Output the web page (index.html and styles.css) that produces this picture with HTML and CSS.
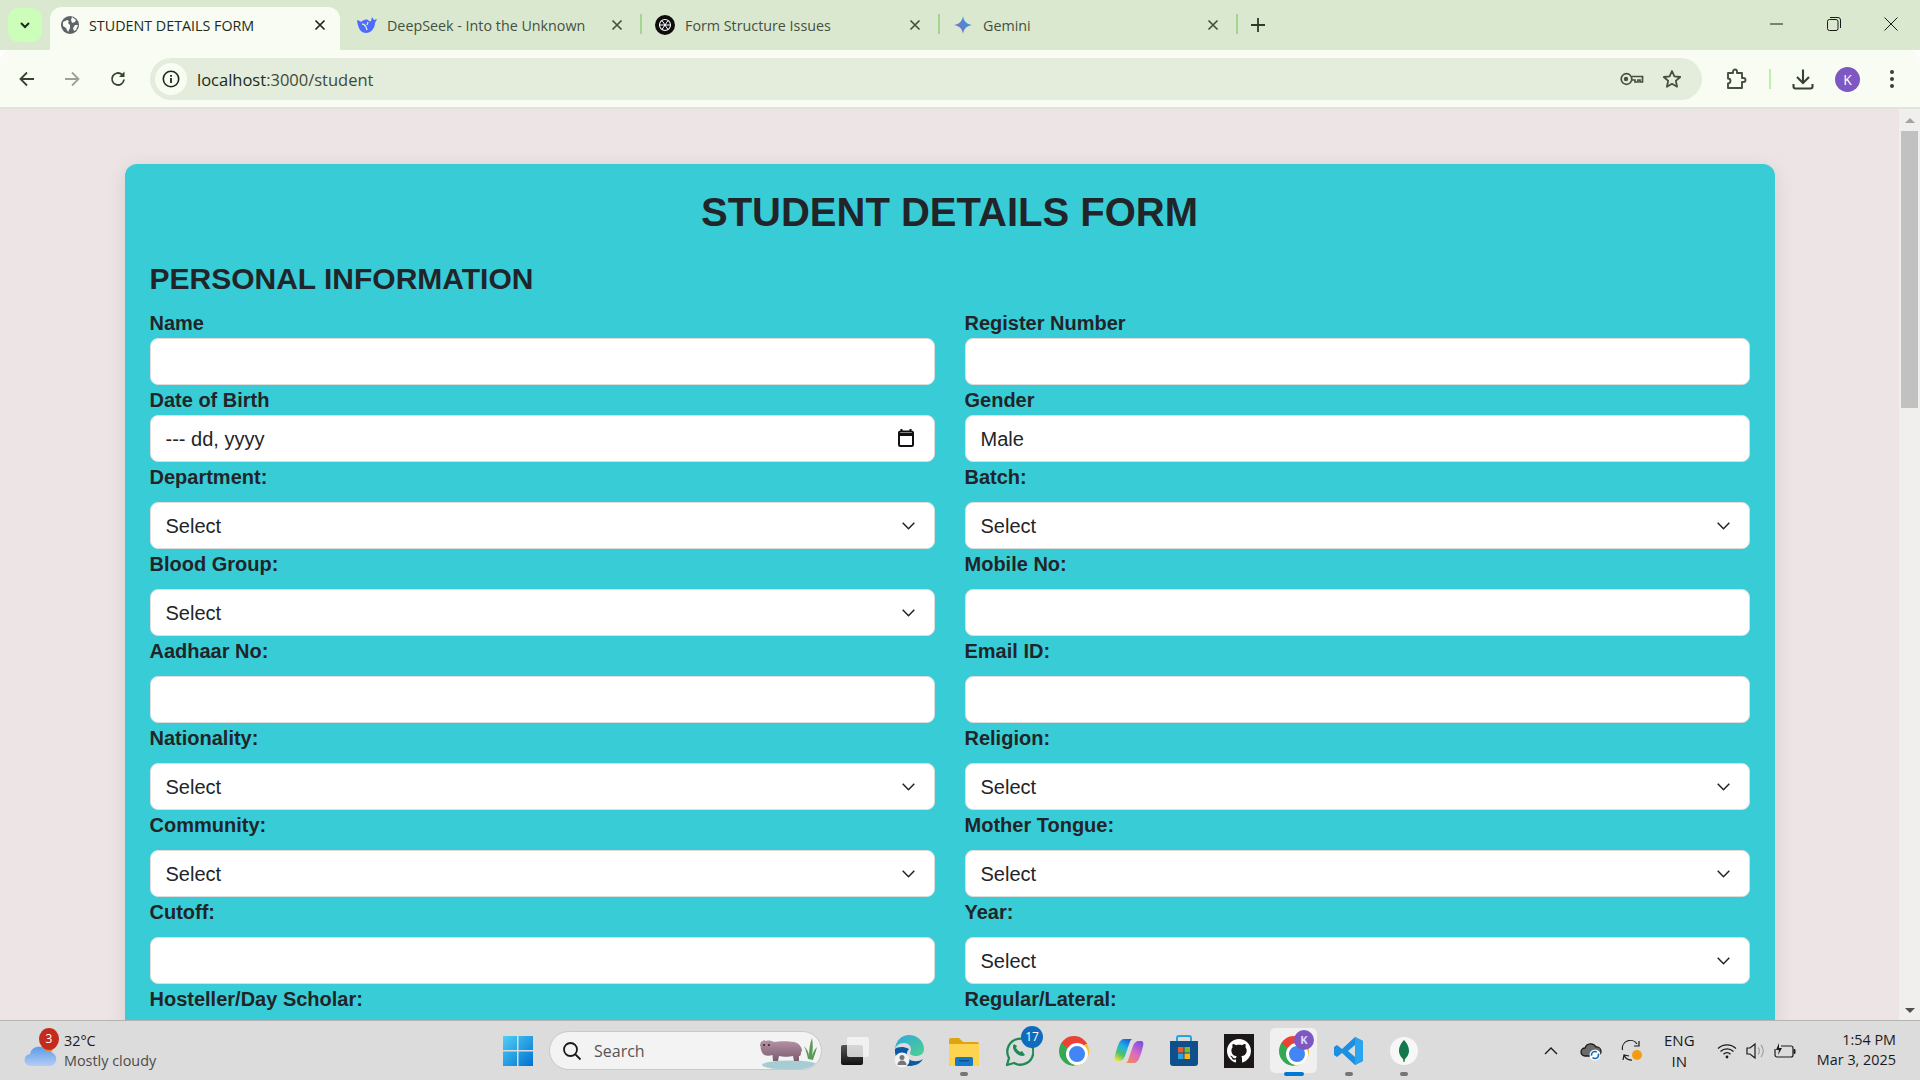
FILE: index.html
```html
<!DOCTYPE html>
<html lang="en">
  <head>
    <meta charset="utf-8" />
    <title>STUDENT DETAILS FORM</title>
    <link rel="stylesheet" href="styles.css">
  </head>

  <body>
    <div class="browser">
      <!-- Tab strip -->
      <div class="tabstrip">
        <button class="tab-search">
          <svg width="14" height="14" viewBox="0 0 14 14"><path d="M3 5l4 4 4-4" fill="none" stroke="#1c2a18" stroke-width="2"/></svg>
        </button>
        <div class="tab tab-active">
          <svg class="favicon" width="18" height="18" viewBox="0 0 18 18"><circle cx="9" cy="9" r="9" fill="#5f6368"/><path d="M2 6l4-2 2 1-1 2 2 2v3l-2 4-2-4-3-2zM11 1l4 3-1 2-3 1-1-3zM14 9l3 0-2 5-2 1-1-3z" fill="#f8fcf3"/></svg>
          <span class="tab-title">STUDENT DETAILS FORM</span>
          <svg class="tab-close" width="12" height="12" viewBox="0 0 12 12"><path d="M1.5 1.5l9 9M10.5 1.5l-9 9" stroke="#1c2a18" stroke-width="1.7"/></svg>
        </div>
        <div class="tab">
          <svg class="favicon" width="20" height="16" viewBox="0 0 20 16"><path d="M0 3c1 0 3 1 4 2 2-2 5-3 7-2 1 1 2 2 3 1l1-4 2 3 3-1-2 4c0 5-4 10-9 10-5 0-8-4-9-13z" fill="#4d6bfe"/><path d="M5 7c2 0 4 2 5 6M11 5l-1 3" stroke="#dae8cf" stroke-width="1.3" fill="none"/></svg>
          <span class="tab-title">DeepSeek - Into the Unknown</span>
          <svg class="tab-close" width="12" height="12" viewBox="0 0 12 12"><path d="M1.5 1.5l9 9M10.5 1.5l-9 9" stroke="#45503f" stroke-width="1.7"/></svg>
        </div>
        <div class="tab">
          <svg class="favicon" width="20" height="20" viewBox="0 0 20 20"><circle cx="10" cy="10" r="10" fill="#0d0d0d"/><circle cx="10" cy="10" r="5.5" fill="none" stroke="#fff" stroke-width="1.1"/><path d="M7 5.5l6 9M13 5.5l-6 9M4.6 10h10.8" stroke="#fff" stroke-width="1"/></svg>
          <span class="tab-title">Form Structure Issues</span>
          <svg class="tab-close" width="12" height="12" viewBox="0 0 12 12"><path d="M1.5 1.5l9 9M10.5 1.5l-9 9" stroke="#45503f" stroke-width="1.7"/></svg>
        </div>
        <div class="tab">
          <svg class="favicon" width="20" height="20" viewBox="0 0 20 20"><defs><linearGradient id="gem" x1="0" y1="1" x2="1" y2="0"><stop offset="0" stop-color="#9168c0"/><stop offset=".5" stop-color="#5684d1"/><stop offset="1" stop-color="#1ba1e3"/></linearGradient></defs><path d="M10 1c.8 5 3.2 8 9 9-5.8 1-8.2 4-9 9-.8-5-3.2-8-9-9 5.8-1 8.2-4 9-9z" fill="url(#gem)"/></svg>
          <span class="tab-title">Gemini</span>
          <svg class="tab-close" width="12" height="12" viewBox="0 0 12 12"><path d="M1.5 1.5l9 9M10.5 1.5l-9 9" stroke="#45503f" stroke-width="1.7"/></svg>
        </div>
        <svg class="new-tab" width="14" height="14" viewBox="0 0 14 14"><path d="M7 0v14M0 7h14" stroke="#2c3a28" stroke-width="1.8"/></svg>
        <div class="window-controls">
          <svg width="14" height="14" viewBox="0 0 14 14"><path d="M0 7h13" stroke="#1a1a1a" stroke-width="1"/></svg>
          <svg width="14" height="14" viewBox="0 0 14 14"><rect x=".5" y="2.5" width="10.5" height="11" rx="2" fill="none" stroke="#1a1a1a"/><path d="M3 .5h8a2.5 2.5 0 0 1 2.5 2.5v8" fill="none" stroke="#1a1a1a"/></svg>
          <svg width="14" height="14" viewBox="0 0 14 14"><path d="M.5.5l13 13M13.5.5l-13 13" stroke="#1a1a1a" stroke-width="1"/></svg>
        </div>
      </div>

      <!-- Address bar -->
      <div class="toolbar">
        <svg class="nav-icon nav-back" width="18" height="18" viewBox="0 0 18 18"><path d="M16 9H3M9 2.5L2.5 9 9 15.5" fill="none" stroke="#36432f" stroke-width="1.8"/></svg>
        <svg class="nav-icon nav-forward" width="18" height="18" viewBox="0 0 18 18"><path d="M2 9h13M9 2.5L15.5 9 9 15.5" fill="none" stroke="#9aa394" stroke-width="1.8"/></svg>
        <svg class="nav-icon nav-reload" width="18" height="18" viewBox="0 0 18 18"><path d="M15 9.5A6 6 0 1 1 13 4.5" fill="none" stroke="#36432f" stroke-width="1.8"/><path d="M15.5 1.5V7H10z" fill="#36432f"/></svg>
        <div class="omnibox">
          <span class="site-info">
            <svg width="18" height="18" viewBox="0 0 18 18"><circle cx="9" cy="9" r="7.7" fill="none" stroke="#1c2a18" stroke-width="1.6"/><path d="M9 8v5M9 5v1.8" stroke="#1c2a18" stroke-width="1.8"/></svg>
          </span>
          <span class="url">localhost<span class="url-path">:3000/student</span></span>
          <svg class="omni-icon" width="24" height="16" viewBox="0 0 24 16"><circle cx="6.5" cy="8" r="5.3" fill="none" stroke="#45503f" stroke-width="1.7"/><circle cx="6" cy="8" r="2.2" fill="#45503f"/><path d="M12 5.5h10.5V11H20V9h-2v2h-3V9h-3" fill="none" stroke="#45503f" stroke-width="1.7"/></svg>
          <svg class="omni-icon" width="20" height="20" viewBox="0 0 20 20"><path d="M10 2l2.4 5.4 5.8.6-4.4 3.9 1.3 5.8L10 14.7l-5.1 3 1.3-5.800L1.800 8l5.800-.6z" fill="none" stroke="#45503f" stroke-width="1.8" stroke-linejoin="round"/></svg>
        </div>
        <svg class="tool-icon" width="22" height="22" viewBox="0 0 22 22"><path d="M3 5h5V3.5a2 2 0 0 1 4 0V5h5v5h1.5a2 2 0 0 1 0 4H17v6H3v-4.5a2.5 2.5 0 0 0 0-5z" fill="none" stroke="#45503f" stroke-width="1.9" stroke-linejoin="round"/></svg>
        <span class="tool-sep"></span>
        <svg class="tool-icon tool-download" width="22" height="22" viewBox="0 0 22 22"><path d="M11 1.5v13M5 9l6 6 6-6M1.5 16v2.5a2 2 0 0 0 2 2h15a2 2 0 0 0 2-2V16" fill="none" stroke="#36432f" stroke-width="2.1"/></svg>
        <span class="avatar">K</span>
        <svg class="tool-icon tool-menu" width="6" height="20" viewBox="0 0 6 20"><circle cx="3" cy="3" r="2" fill="#36432f"/><circle cx="3" cy="10" r="2" fill="#36432f"/><circle cx="3" cy="17" r="2" fill="#36432f"/></svg>
      </div>

      <div class="viewport">
        <main class="page">
          <form class="form-card">
            <h1 class="form-title">STUDENT DETAILS FORM</h1>
            <h2 class="section-title">PERSONAL INFORMATION</h2>
            <div class="form-grid">
              <div class="field"><label class="field-label">Name</label><input class="control" type="text"></div>
              <div class="field"><label class="field-label">Register Number</label><input class="control" type="text"></div>
              <div class="field">
                <label class="field-label">Date of Birth</label>
                <div class="date-wrap">
                  <input class="control" type="text" value="--- dd, yyyy">
                  <svg class="date-icon" width="18" height="20" viewBox="0 0 18 20"><path d="M4.5 1v3M13.5 1v3" stroke="#111" stroke-width="2"/><rect x="2" y="3.5" width="14" height="14.5" rx="1.5" fill="none" stroke="#111" stroke-width="2"/><path d="M2 5h14v3H2z" fill="#111"/></svg>
                </div>
              </div>
              <div class="field"><label class="field-label">Gender</label><input class="control" type="text" value="Male"></div>

              <div class="field"><label class="field-label field-label-spaced">Department:</label><select class="control control-select"><option>Select</option></select></div>
              <div class="field"><label class="field-label field-label-spaced">Batch:</label><select class="control control-select"><option>Select</option></select></div>
              <div class="field"><label class="field-label field-label-spaced">Blood Group:</label><select class="control control-select"><option>Select</option></select></div>
              <div class="field"><label class="field-label field-label-spaced">Mobile No:</label><input class="control" type="text"></div>
              <div class="field"><label class="field-label field-label-spaced">Aadhaar No:</label><input class="control" type="text"></div>
              <div class="field"><label class="field-label field-label-spaced">Email ID:</label><input class="control" type="text"></div>
              <div class="field"><label class="field-label field-label-spaced">Nationality:</label><select class="control control-select"><option>Select</option></select></div>
              <div class="field"><label class="field-label field-label-spaced">Religion:</label><select class="control control-select"><option>Select</option></select></div>
              <div class="field"><label class="field-label field-label-spaced">Community:</label><select class="control control-select"><option>Select</option></select></div>
              <div class="field"><label class="field-label field-label-spaced">Mother Tongue:</label><select class="control control-select"><option>Select</option></select></div>
              <div class="field"><label class="field-label field-label-spaced">Cutoff:</label><input class="control" type="text"></div>
              <div class="field"><label class="field-label field-label-spaced">Year:</label><select class="control control-select"><option>Select</option></select></div>
              <div class="field"><label class="field-label field-label-spaced">Hosteller/Day Scholar:</label><select class="control control-select"><option>Select</option></select></div>
              <div class="field"><label class="field-label field-label-spaced">Regular/Lateral:</label><select class="control control-select"><option>Select</option></select></div>
            </div>
          </form>
        </main>
        <div class="scrollbar">
          <span class="scroll-arrow scroll-up"></span>
          <span class="scroll-thumb"></span>
          <span class="scroll-arrow scroll-down"></span>
        </div>
      </div>

      <!-- Windows taskbar -->
      <footer class="taskbar">
        <div class="weather">
          <span class="weather-icon">
            <svg width="34" height="30" viewBox="0 0 34 30"><defs><linearGradient id="cloud" x1="0" y1="0" x2="0" y2="1"><stop offset="0" stop-color="#5d9be8"/><stop offset="1" stop-color="#b3cdf5"/></linearGradient></defs><circle cx="24" cy="9" r="5" fill="#f08a24"/><path d="M7 27a6 6 0 0 1-1-12 9 9 0 0 1 17-2 7 7 0 0 1 4 14z" fill="url(#cloud)"/></svg>
            <span class="weather-badge">3</span>
          </span>
          <div class="weather-text">
            <span class="weather-temp">32°C</span>
            <span class="weather-desc">Mostly cloudy</span>
          </div>
        </div>

        <svg class="win-logo" width="30" height="30" viewBox="0 0 30 30"><defs><linearGradient id="win" x1="0" y1="0" x2="1" y2="1"><stop offset="0" stop-color="#4fd0f5"/><stop offset="1" stop-color="#0070d1"/></linearGradient></defs><path d="M0 0h14v14H0zM15.5 0H30v14H15.5zM0 15.5h14V30H0zM15.5 15.5H30V30H15.5z" fill="url(#win)"/></svg>

        <div class="task-search">
          <svg width="20" height="20" viewBox="0 0 20 20"><circle cx="8.5" cy="8.5" r="6.5" fill="none" stroke="#1a1a1a" stroke-width="1.8"/><path d="M13 13l5.5 5.5" stroke="#1a1a1a" stroke-width="1.8"/></svg>
          <span class="task-search-text">Search</span>
          <svg class="search-art" width="60" height="38" viewBox="0 0 60 38"><defs><linearGradient id="hippo" x1="0" y1="0" x2="0" y2="1"><stop offset="0" stop-color="#b793a6"/><stop offset="1" stop-color="#7a5c70"/></linearGradient></defs><ellipse cx="32" cy="33" rx="28" ry="4.5" fill="#a7cdd4"/><path d="M50 27c-1-5-2-9-4-13 3 3 5 7 5 10 0-7 1-13 3-18 1 6 1 12 0 18 1-4 3-7 5-9-1 5-3 9-4 13z" fill="#5c9a58"/><path d="M2 14c0-3 1-5 3-5l1-1 2 1c3-1 6 0 8 1 6-1 14-1 20 0 5 1 8 5 8 9l-1 1c0 1 0 3-1 4l-1 0v5h-5l-1-5c-4 1-10 1-14 0l-1 5h-5l-.5-6c-3 1-6 1-8 0-2-1-4-4-4-9z" fill="url(#hippo)"/><circle cx="6" cy="13" r="1" fill="#2c2228"/><circle cx="11" cy="13" r="1" fill="#2c2228"/></svg>
        </div>

        <div class="task-icons">
          <span class="task-item">
            <svg width="30" height="30" viewBox="0 0 30 30"><defs><linearGradient id="tv" x1="0" y1="0" x2="0" y2="1"><stop offset="0" stop-color="#555"/><stop offset="1" stop-color="#111"/></linearGradient></defs><rect x="2" y="9" width="22" height="20" rx="2" fill="url(#tv)"/><rect x="8" y="1" width="22" height="20" rx="2" fill="#f6f6f6" fill-opacity=".8"/></svg>
          </span>
          <span class="task-item">
            <svg width="30" height="34" viewBox="0 0 30 34"><defs><linearGradient id="edge1" x1="0" y1="0" x2="1" y2="1"><stop offset="0" stop-color="#2fa8e0"/><stop offset="1" stop-color="#4fd18b"/></linearGradient></defs><path d="M1 15C2 6 8 1 15 1c8 0 15 6 15 14 0 5-4 7-8 7-3 0-6-1-6-3 0-1 1-2 1-4 0-3-3-6-7-6-5 0-8 3-9 6z" fill="url(#edge1)"/><path d="M1 15c-1 9 6 17 14 17 6 0 11-2 14-7-4 3-11 3-14 0-3-3-3-7 0-10-6-3-12-2-14 0z" fill="#0c59a4"/><circle cx="8" cy="26" r="7.5" fill="#f2f2f2"/><circle cx="8" cy="23.5" r="2.5" fill="#767676"/><path d="M3.5 31c0-3 2-4.5 4.5-4.5s4.5 1.5 4.5 4.5z" fill="#767676"/></svg>
          </span>
          <span class="task-item task-running">
            <svg width="32" height="30" viewBox="0 0 32 30"><path d="M1 4a2 2 0 0 1 2-2h8l4 4h14a2 2 0 0 1 2 2v20a2 2 0 0 1-2 2H3a2 2 0 0 1-2-2z" fill="#e0a412"/><path d="M1 8h30v20a2 2 0 0 1-2 2H3a2 2 0 0 1-2-2z" fill="#fcd450"/><rect x="7" y="21" width="18" height="9" rx="1.5" fill="#1379c9"/><rect x="11" y="24" width="10" height="1.5" fill="#0a4f8c"/></svg>
          </span>
          <span class="task-item">
            <svg width="30" height="34" viewBox="0 0 30 34"><path d="M3 31l2-7A13 13 0 1 1 10 29z" fill="none" stroke="#1f8a55" stroke-width="2.3" stroke-linejoin="round"/><path d="M10 10c-2 2-1 6 2 9s7 4 9 2l-3-4-2 1c-2-1-3-3-4-4l1-2z" fill="#1f8a55"/></svg>
            <span class="task-badge">17</span>
          </span>
          <span class="task-item"><span class="chrome-logo"></span></span>
          <span class="task-item">
            <svg width="30" height="30" viewBox="0 0 30 30"><defs><linearGradient id="cop1" x1=".7" y1="0" x2=".2" y2="1"><stop offset="0" stop-color="#1f5fd8"/><stop offset=".35" stop-color="#1fb0e8"/><stop offset=".7" stop-color="#4cc36a"/><stop offset="1" stop-color="#e7e23f"/></linearGradient><linearGradient id="cop2" x1=".8" y1="0" x2=".2" y2="1"><stop offset="0" stop-color="#7a4fe0"/><stop offset=".5" stop-color="#d868c8"/><stop offset="1" stop-color="#f28a5a"/></linearGradient></defs><path d="M20 27h-9c2 0 3-2 3.5-4L19 10c1-3 3-5 6-5h2c2 0 3 2 2 5-1 5-3 11-4 13-1 2-3 4-5 4z" fill="url(#cop2)"/><path d="M10 3h9c-2 0-3 2-3.5 4L11 20c-1 3-3 5-6 5H3c-2 0-3-2-2-5C2 15 4 9 5 7c1-2 3-4 5-4z" fill="url(#cop1)"/></svg>
          </span>
          <span class="task-item">
            <svg width="30" height="32" viewBox="0 0 30 32"><path d="M8 6V3a2 2 0 0 1 2-2h10a2 2 0 0 1 2 2v3" fill="none" stroke="#27a4e0" stroke-width="2"/><path d="M1 6h28v22a3 3 0 0 1-3 3H4a3 3 0 0 1-3-3z" fill="#0f4f8b"/><rect x="9" y="12" width="5.5" height="5.5" fill="#f05a28"/><rect x="15.5" y="12" width="5.5" height="5.5" fill="#7cb928"/><rect x="9" y="18.5" width="5.5" height="5.5" fill="#27a4e0"/><rect x="15.5" y="18.5" width="5.5" height="5.5" fill="#fbb615"/></svg>
          </span>
          <span class="task-item">
            <svg class="github-logo" width="30" height="34" viewBox="0 0 30 34"><rect width="30" height="34" fill="#1b1717"/><g transform="translate(3 5) scale(1.5)"><path d="M8 0C3.58 0 0 3.58 0 8c0 3.54 2.29 6.53 5.47 7.59.4.07.55-.17.55-.38 0-.19-.01-.82-.01-1.49-2.01.37-2.53-.49-2.69-.94-.09-.23-.48-.94-.82-1.13-.28-.15-.68-.52-.01-.53.63-.01 1.08.58 1.23.82.72 1.21 1.87.87 2.33.66.07-.52.28-.87.51-1.07-1.78-.2-3.64-.89-3.64-3.95 0-.87.31-1.59.82-2.15-.08-.2-.36-1.02.08-2.12 0 0 .67-.21 2.2.82.64-.18 1.32-.27 2-.27.68 0 1.36.09 2 .27 1.53-1.04 2.2-.82 2.2-.82.44 1.1.16 1.92.08 2.12.51.56.82 1.27.82 2.15 0 3.07-1.87 3.75-3.65 3.95.29.25.54.73.54 1.48 0 1.07-.01 1.93-.01 2.2 0 .21.15.46.55.38A8.013 8.013 0 0 0 16 8c0-4.42-3.58-8-8-8z" fill="#fff"/></g></svg>
          </span>
          <span class="task-item task-active">
            <span class="chrome-logo"></span>
            <span class="chrome-profile">K</span>
          </span>
          <span class="task-item task-running">
            <svg width="30" height="30" viewBox="0 0 30 30"><path d="M21 1l8 4v20l-8 4-13-12-5 4-3-2V11l3-2 5 4zM21 9l-7 6 7 6z" fill="#1c8fe0"/><path d="M21 1l8 4v20l-8 4z" fill="#2aa4ee"/></svg>
          </span>
          <span class="task-item task-running">
            <svg width="30" height="30" viewBox="0 0 30 30"><circle cx="15" cy="15" r="14" fill="#f7f7f7"/><path d="M15 4c4 4 5 8 5 11 0 4-3 7-4 8l-.5 3h-1l-.5-3c-1-1-4-4-4-8 0-3 1-7 5-11z" fill="#13794a"/></svg>
          </span>
        </div>

        <div class="tray">
          <svg class="tray-caret" width="14" height="8" viewBox="0 0 14 8"><path d="M1 7l6-6 6 6" fill="none" stroke="#1a1a1a" stroke-width="1.4"/></svg>
          <svg class="tray-cloud" width="22" height="20" viewBox="0 0 22 20"><path d="M5 15a4 4 0 0 1 0-8 6 6 0 0 1 11-1 4.5 4.5 0 0 1 1 9z" fill="#6b6b6b" stroke="#1a1a1a" stroke-width="1.3"/><circle cx="15" cy="14" r="5.5" fill="#fff"/><circle cx="15" cy="14" r="3.5" fill="none" stroke="#0f6cbd" stroke-width="1.7" stroke-dasharray="8 2"/></svg>
          <svg class="tray-sync" width="22" height="22" viewBox="0 0 22 22"><path d="M1.5 10A8 8 0 0 1 16 4M18 1v5h-5M2 20l1-5 5 1M3 15a8 8 0 0 0 8 5" fill="none" stroke="#1a1a1a" stroke-width="1.2"/><circle cx="16" cy="15" r="5" fill="#f39c12"/></svg>
          <div class="tray-lang"><span>ENG</span><span>IN</span></div>
          <svg class="tray-wifi" width="20" height="16" viewBox="0 0 20 16"><path d="M1 5.5a13 13 0 0 1 18 0M3.5 8.5a9.5 9.5 0 0 1 13 0M6.5 11.2a5 5 0 0 1 7 0" fill="none" stroke="#1a1a1a" stroke-width="1.3"/><circle cx="10" cy="14" r="1.4" fill="#1a1a1a"/></svg>
          <svg class="tray-volume" width="20" height="18" viewBox="0 0 20 18"><path d="M1 6h3l5-4v14l-5-4H1z" fill="none" stroke="#1a1a1a" stroke-width="1.2"/><path d="M12 5.5a5 5 0 0 1 0 7M15 3a9 9 0 0 1 0 12" fill="none" stroke="#a0a0a0" stroke-width="1.2"/></svg>
          <svg class="tray-battery" width="22" height="16" viewBox="0 0 22 16"><path d="M7 3h10a2 2 0 0 1 2 2v7a2 2 0 0 1-2 2H3a2 2 0 0 1-2-2V6" fill="none" stroke="#1a1a1a" stroke-width="1.2"/><rect x="19.5" y="6" width="2" height="5" rx="1" fill="#1a1a1a"/><path d="M5 0L2 7h3l-1 5 4-7H5z" fill="#1a1a1a"/></svg>
          <div class="tray-clock"><span>1:54 PM</span><span>Mar 3, 2025</span></div>
        </div>
      </footer>
    </div>
  </body>
</html>
```

FILE: styles.css
```css
* {
  box-sizing: border-box;
}

html,
body {
  margin: 0;
  padding: 0;
  height: 100%;
  overflow: hidden;
}

body {
  font-family: "Liberation Sans", Arial, sans-serif;
  color: #212529;
}

.browser {
  display: flex;
  flex-direction: column;
  height: 100vh;
}

/* Tab strip */
.tabstrip {
  display: flex;
  align-items: flex-end;
  height: 50px;
  flex-shrink: 0;
  padding-left: 8px;
  background-color: #dae8cf;
  font-family: "Open Sans", sans-serif;
}

.tab-search {
  align-self: flex-start;
  width: 34px;
  height: 34px;
  margin-top: 8px;
  padding: 0;
  border: none;
  border-radius: 10px;
  background-color: #ccfdb9;
  display: flex;
  align-items: center;
  justify-content: center;
}

.tab {
  display: flex;
  align-items: center;
  position: relative;
  width: 298px;
  height: 43px;
  padding: 0 19px 7px 13px;
  font-size: 14.3px;
  color: #45503f;
}

.tab::after {
  content: "";
  position: absolute;
  right: 0;
  top: 7px;
  width: 2px;
  height: 20px;
  background-color: #a6d68e;
}

.tab-active {
  width: 290px;
  margin: 0 4px 0 8px;
  padding-left: 11px;
  padding-right: 14px;
  border-radius: 12px 12px 0 0;
  background-color: #f8fcf3;
  color: #1c2a18;
}

.tab-active::after {
  display: none;
}

.favicon {
  flex-shrink: 0;
  margin-right: 10px;
}

.tab-title {
  flex: 1;
  white-space: nowrap;
  overflow: hidden;
}

.new-tab {
  margin: 0 0 18px 13px;
}

.window-controls {
  display: flex;
  align-self: flex-start;
  gap: 43px;
  margin: 17px 22px 0 auto;
}

/* Toolbar */
.toolbar {
  display: flex;
  align-items: center;
  height: 59px;
  flex-shrink: 0;
  padding-top: 1px;
  background-color: #f8fcf3;
  border-bottom: 2px solid #e0e4da;
  border-radius: 12px 12px 0 0;
}

.nav-icon {
  flex-shrink: 0;
}

.nav-back {
  margin-left: 18px;
}

.nav-forward {
  margin-left: 27px;
}

.nav-reload {
  margin-left: 28px;
}

.omnibox {
  display: flex;
  align-items: center;
  flex-shrink: 0;
  width: 1552px;
  height: 42px;
  margin-left: 23px;
  padding: 0 20px 0 5px;
  border-radius: 21px;
  background-color: #e4ecdc;
}

.site-info {
  display: flex;
  align-items: center;
  justify-content: center;
  width: 32px;
  height: 32px;
  border-radius: 50%;
  background-color: #f8fcf3;
}

.url {
  flex: 1;
  margin-left: 10px;
  font-family: "Open Sans", sans-serif;
  font-size: 16.5px;
  color: #1c2a18;
}

.url-path {
  color: #3f4a39;
}

.omni-icon {
  margin-left: 18px;
}

.tool-icon {
  flex-shrink: 0;
  margin-left: 23px;
}

.tool-sep {
  width: 2px;
  height: 20px;
  margin-left: 22px;
  background-color: #bdf0a6;
}

.tool-download {
  margin-left: 21px;
}

.avatar {
  display: flex;
  align-items: center;
  justify-content: center;
  flex-shrink: 0;
  width: 25px;
  height: 25px;
  margin-left: 21px;
  border-radius: 50%;
  background-color: #7e57c2;
  color: #fff;
  font-family: "Open Sans", sans-serif;
  font-size: 14px;
}

.tool-menu {
  margin-left: 29px;
}

/* Page area */
.viewport {
  display: flex;
  flex: 1;
  min-height: 0;
}

.page {
  flex: 1;
  min-width: 0;
  padding-top: 55px;
  overflow: hidden;
  background-color: #ede4e6;
}

.form-card {
  width: 1650px;
  margin: 0 auto;
  padding: 25px;
  border-radius: 12px;
  background-color: #38cdd6;
  box-shadow: 0 4px 20px rgba(0, 0, 0, 0.1);
}

.form-title {
  margin: 0 0 26px;
  font-size: 40px;
  line-height: 47px;
  font-weight: bold;
  text-align: center;
}

.section-title {
  margin: 0 0 17px;
  font-size: 30px;
  line-height: 34px;
  font-weight: bold;
}

.form-grid {
  display: grid;
  grid-template-columns: 1fr 1fr;
  column-gap: 30px;
}

.field {
  margin-bottom: 5px;
}

.field-label {
  display: block;
  margin-bottom: 5px;
  font-size: 20px;
  line-height: 20px;
  font-weight: bold;
}

.field-label-spaced {
  margin-bottom: 15px;
}

.control {
  display: block;
  width: 100%;
  height: 47px;
  padding: 1px 15px 0;
  border: 1px solid #ddd;
  border-radius: 8px;
  background-color: #fff;
  color: #212529;
  font-family: "Liberation Sans", Arial, sans-serif;
  font-size: 20px;
}

.control-select {
  padding-top: 0;
  appearance: none;
  background-image: url("data:image/svg+xml,%3Csvg xmlns='http://www.w3.org/2000/svg' width='13' height='8' viewBox='0 0 13 8'%3E%3Cpath d='M.7.7l5.8 6 5.8-6' fill='none' stroke='%23222' stroke-width='1.5'/%3E%3C/svg%3E");
  background-repeat: no-repeat;
  background-position: right 19px center;
}

.date-wrap {
  position: relative;
}

.date-icon {
  position: absolute;
  right: 20px;
  top: 13px;
}

/* Scrollbar */
.scrollbar {
  display: flex;
  flex-direction: column;
  align-items: center;
  width: 21px;
  flex-shrink: 0;
  background-color: #f1eeee;
}

.scroll-arrow {
  width: 0;
  height: 0;
  border-left: 5px solid transparent;
  border-right: 5px solid transparent;
}

.scroll-up {
  margin-top: 9px;
  border-bottom: 5px solid #a3a3a3;
}

.scroll-down {
  margin-top: auto;
  margin-bottom: 7px;
  border-top: 5px solid #505050;
}

.scroll-thumb {
  width: 17px;
  height: 277px;
  margin-top: 8px;
  background-color: #c1c1c1;
}

/* Taskbar */
.taskbar {
  display: flex;
  align-items: center;
  height: 60px;
  flex-shrink: 0;
  border-top: 1px solid #b5b5b5;
  background-color: #dcdcdc;
  font-family: "Open Sans", sans-serif;
}

.weather {
  display: flex;
  align-items: center;
  width: 503px;
  padding-left: 24px;
}

.weather-icon {
  position: relative;
  width: 34px;
  height: 36px;
  display: flex;
  align-items: flex-end;
}

.weather-badge {
  position: absolute;
  top: -5px;
  left: 15px;
  width: 20px;
  height: 22px;
  border-radius: 50%;
  background-color: #c42b1c;
  color: #fff;
  font-size: 12px;
  line-height: 22px;
  text-align: center;
}

.weather-text {
  display: flex;
  flex-direction: column;
  margin-left: 6px;
  font-size: 14.4px;
  line-height: 20px;
}

.weather-temp {
  color: #1a1a1a;
}

.weather-desc {
  color: #4b4b4b;
}

.task-search {
  display: flex;
  align-items: center;
  position: relative;
  width: 273px;
  height: 39px;
  margin-left: 16px;
  padding-left: 12px;
  border: 1px solid #c8c8c8;
  border-radius: 20px;
  background-color: #f3f3f3;
  overflow: hidden;
}

.task-search-text {
  margin-left: 12px;
  font-size: 16px;
  color: #555;
}

.search-art {
  position: absolute;
  right: 3px;
  top: 0;
}

.task-icons {
  display: flex;
  margin-left: 4px;
}

.task-item {
  display: flex;
  align-items: center;
  justify-content: center;
  position: relative;
  width: 55px;
  height: 45px;
  flex-shrink: 0;
  border-radius: 5px;
}

.task-running::after,
.task-active::after {
  content: "";
  position: absolute;
  bottom: -3px;
  left: 50%;
  width: 8px;
  height: 4px;
  margin-left: -4px;
  border-radius: 2px;
  background-color: #757575;
}

.task-active {
  width: 47px;
  margin: 0 4px;
  background-color: #f0f0f0;
}

.task-active::after {
  width: 20px;
  margin-left: -10px;
  background-color: #0078d4;
}

.task-badge {
  position: absolute;
  top: -2px;
  right: 3px;
  width: 22px;
  height: 22px;
  border-radius: 50%;
  background-color: #0f6cbd;
  color: #fff;
  font-size: 12px;
  line-height: 22px;
  text-align: center;
}

.chrome-logo {
  display: block;
  position: relative;
  width: 30px;
  height: 30px;
  border-radius: 50%;
  background: conic-gradient(from -60deg, #ea4335 0 120deg, #fbc02d 0 240deg, #34a853 0);
}

.chrome-logo::after {
  content: "";
  position: absolute;
  left: 7px;
  top: 7px;
  width: 16px;
  height: 16px;
  border: 3px solid #fff;
  border-radius: 50%;
  background-color: #4285f4;
}

.chrome-profile {
  position: absolute;
  top: 2px;
  right: 3px;
  width: 20px;
  height: 20px;
  border-radius: 50%;
  background-color: #7e57c2;
  color: #e0d8f0;
  font-size: 11px;
  font-weight: bold;
  line-height: 20px;
  text-align: center;
}

.tray {
  display: flex;
  align-items: center;
  flex: 1;
  padding-right: 24px;
}

.tray-caret {
  margin-left: 113px;
}

.tray-cloud {
  margin-left: 22px;
}

.tray-sync {
  margin-left: 19px;
}

.tray-lang {
  display: flex;
  flex-direction: column;
  align-items: center;
  margin-left: 21px;
  font-size: 15px;
  line-height: 21px;
  color: #1a1a1a;
}

.tray-wifi {
  margin-left: 22px;
}

.tray-volume {
  margin-left: 9px;
}

.tray-battery {
  margin-left: 8px;
}

.tray-clock {
  display: flex;
  flex-direction: column;
  align-items: flex-end;
  margin-top: -2px;
  margin-left: auto;
  font-size: 14.4px;
  line-height: 20px;
  color: #1a1a1a;
}
```
